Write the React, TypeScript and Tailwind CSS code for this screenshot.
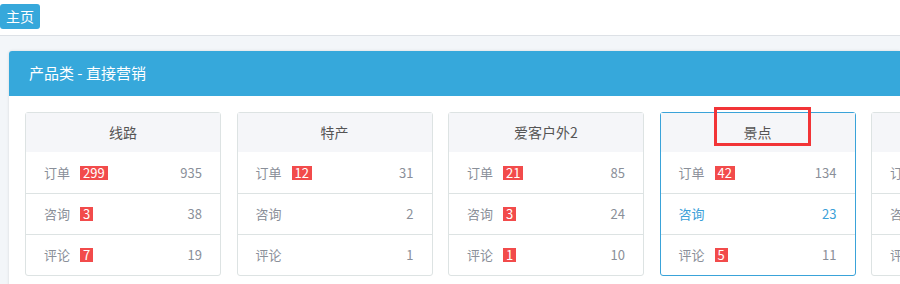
const CARDS = [
  { title: '线路', rows: [
    { label: '订单', badge: 299, count: 935 },
    { label: '咨询', badge: 3, count: 38 },
    { label: '评论', badge: 7, count: 19 },
  ] },
  { title: '特产', rows: [
    { label: '订单', badge: 12, count: 31 },
    { label: '咨询', count: 2 },
    { label: '评论', count: 1 },
  ] },
  { title: '爱客户外2', rows: [
    { label: '订单', badge: 21, count: 85 },
    { label: '咨询', badge: 3, count: 24 },
    { label: '评论', badge: 1, count: 10 },
  ] },
  { title: '景点', active: true, rows: [
    { label: '订单', badge: 42, count: 134 },
    { label: '咨询', count: 23, hover: true },
    { label: '评论', badge: 5, count: 11 },
  ] },
  { title: '门票', rows: [
    { label: '订单', count: 0 },
    { label: '咨询', count: 0 },
    { label: '评论', count: 0 },
  ] },
]

type Row = { label: string; badge?: number; count: number; hover?: boolean }

function Card({ title, rows, active }: { title: string; rows: Row[]; active?: boolean }) {
  return (
    <div
      className={[
        'relative w-[196px] shrink-0 rounded-[3px] border bg-white',
        active ? 'border-[#3aa3d9]' : 'border-[#dde3e3]',
      ].join(' ')}
    >
      <div className="h-[39px] bg-[#f5f6f9] flex items-center justify-center text-[14px] text-[#555]">
        {title}
      </div>
      {rows.map((r, i) => (
        <div
          key={i}
          className={[
            'h-[41px] flex items-center pl-[18px] pr-[18px] text-[13px]',
            i > 0 ? 'border-t border-[#dde3e3]' : '',
            r.hover ? 'text-[#3aa0d8]' : 'text-[#8a8f99]',
          ].join(' ')}
        >
          <span>{r.label}</span>
          {r.badge !== undefined && (
            <span className="ml-[10px] h-[14px] px-[3px] bg-[#f24b4b] text-white text-[13px] leading-[14px] flex items-center">
              {r.badge}
            </span>
          )}
          <span className="ml-auto">{r.count}</span>
        </div>
      ))}
      {active && (
        <div className="absolute left-[53px] top-[-6px] w-[97px] h-[39px] border-[3px] border-[#f23437]" />
      )}
    </div>
  )
}

export default function App() {
  return (
    <div
      className="w-[900px] h-[284px] overflow-hidden bg-white"
      style={{ fontFamily: '"Noto Sans CJK SC", "Liberation Sans", sans-serif' }}
    >
      {/* top bar */}
      <div className="h-[36px] pt-[4px] border-b border-[#dde1e6] flex items-start">
        <div className="flex items-center h-[25px] w-[40px] pl-[6px] rounded-[3px] bg-[#36a8db] text-white text-[14px]">
          主页
        </div>
      </div>

      <div className="bg-[#f3f6f9] pt-[15px] pl-[9px]">
        <div className="rounded-tl-[3px] bg-white shadow-[0_0_3px_rgba(0,0,0,0.12)]">
          <div className="h-[45px] bg-[#36a8db] flex items-center pl-[20px] text-white text-[15px] rounded-tl-[3px]">
            产品类 - 直接营销
          </div>
          <div className="flex gap-[15.5px] pl-[16px] pt-[16px] pb-[16px] overflow-hidden">
            {CARDS.map((c) => (
              <Card key={c.title} {...c} />
            ))}
          </div>
        </div>
      </div>
    </div>
  )
}
